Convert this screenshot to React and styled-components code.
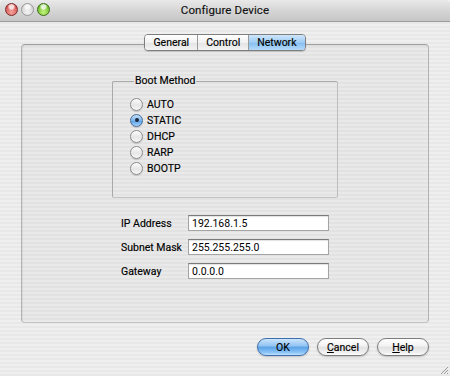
import React from 'react'
import styled, { createGlobalStyle } from 'styled-components'

const Global = createGlobalStyle`
	html, body {
		margin: 0;
		padding: 0;
		overflow: hidden;
	}
	body {
		font-family: Roboto, "Liberation Sans", sans-serif;
		font-size: 10.5px;
		color: #000;
	}
`

const Window = styled.div`
	position: relative;
	width: 450px;
	height: 376px;
	display: flex;
	flex-direction: column;
	background: repeating-linear-gradient(to bottom, #efefef 0 2px, #e8e8e8 2px 4px);
	overflow: hidden;
`

const TitleBar = styled.div`
	height: 22px;
	box-sizing: border-box;
	display: grid;
	grid-template-columns: 1fr auto 1fr;
	align-items: center;
	background: linear-gradient(to bottom, #e9e9e9, #d2d2d2 60%, #c6c6c6);
	border-bottom: 1px solid #9c9c9c;
	border-radius: 5px 5px 0 0;
`

const Lights = styled.div`
	display: flex;
	gap: 3px;
	padding-left: 5px;
	margin-top: -3px;
`

const Light = styled.span`
	width: 13px;
	height: 13px;
	box-sizing: border-box;
	border-radius: 50%;
	border: 1px solid ${p => p.$ring};
	background:
		radial-gradient(circle at 50% 25%, rgba(255,255,255,0.8) 0 2px, rgba(255,255,255,0) 4px),
		radial-gradient(circle at 50% 75%, ${p => p.$glow} 0, ${p => p.$fill} 70%);
`

const Title = styled.div`
	font-size: 11.5px;
	color: #111;
	margin-top: -2px;
	letter-spacing: 0.1px;
	-webkit-text-stroke: 0.15px #111;
`

const Content = styled.div`
	display: flex;
	flex-direction: column;
	padding: 12px 21px 0 21px;
`

const Tabs = styled.div`
	display: flex;
	justify-content: center;
	position: relative;
	z-index: 1;
`

const Segments = styled.div`
	display: flex;
	height: 17px;
	box-sizing: border-box;
	border: 1px solid #7e7e7e;
	border-radius: 4px;
	overflow: hidden;
	box-shadow: 0 1px 1px rgba(0,0,0,0.15);
`

const Tab = styled.div`
	padding: 0 8px;
	display: flex;
	align-items: center;
	font-size: 10.5px;
	color: #000;
	-webkit-text-stroke: 0.15px #000;
	background: ${p => p.$active
		? 'linear-gradient(to bottom, #cfe6fb, #9ccbf3 50%, #84bdf0 51%, #b5dafa)'
		: 'linear-gradient(to bottom, #ffffff, #f1f1f1 50%, #e3e3e3 51%, #f3f3f3)'};
	& + & {
		border-left: 1px solid #9a9a9a;
	}
`

const Panel = styled.div`
	margin-top: -7px;
	height: 279px;
	box-sizing: border-box;
	border: 1px solid #b2b2b2;
	border-top-color: #9e9e9e;
	border-bottom-color: #c4c4c4;
	border-radius: 4px;
	background: rgba(0,0,0,0.025);
	box-shadow: inset 1px 1px 1px rgba(0,0,0,0.06);
	padding-top: 30px;
	display: flex;
	flex-direction: column;
	align-items: center;
`

const Group = styled.fieldset`
	width: 226px;
	box-sizing: border-box;
	margin: 0;
	padding: 9px 0 21px 18px;
	border: 1px solid #a9a9a9;
	border-bottom-color: #c2c2c2;
	border-right-color: #bdbdbd;
	border-radius: 2px;
	display: flex;
	flex-direction: column;
`

const Legend = styled.legend`
	font-size: 10.5px;
	line-height: 12px;
	padding: 0 1px;
	margin-left: 3px;
	color: #000;
	-webkit-text-stroke: 0.15px #000;
`

const Option = styled.label`
	height: 16px;
	display: flex;
	align-items: center;
	gap: 4px;
	font-size: 10.5px;
	color: #000;
	-webkit-text-stroke: 0.15px #000;
`

const Radio = styled.input`
	appearance: none;
	margin: 0 0 0 -1px;
	width: 13px;
	height: 13px;
	box-sizing: border-box;
	border-radius: 50%;
	border: 1px solid #8c8c8c;
	background: linear-gradient(to bottom, #fdfdfd, #e6e6e6 55%, #f6f6f6);
	box-shadow: 0 1px 1px rgba(0,0,0,0.15);
	position: relative;
	&:checked {
		border-color: #4a6c98;
		background: linear-gradient(to bottom, #c4e0fa, #7db6ee 50%, #5a9fe6 55%, #a6d3fb);
	}
	&:checked::after {
		content: '';
		position: absolute;
		left: 3.5px;
		top: 3.5px;
		width: 4px;
		height: 4px;
		border-radius: 50%;
		background: #1e2a3c;
	}
`

const Fields = styled.div`
	margin-top: 17px;
	display: grid;
	grid-template-columns: 67px 141px;
	row-gap: 8px;
	align-items: center;
`

const FieldLabel = styled.label`
	font-size: 10.5px;
	color: #000;
	-webkit-text-stroke: 0.15px #000;
`

const Field = styled.input`
	width: 141px;
	height: 16px;
	box-sizing: border-box;
	margin: 0;
	padding: 0 3px;
	border: 1px solid #a4a4a4;
	border-top-color: #7a7a7a;
	background: #fff;
	box-shadow: inset 0 1px 1px rgba(0,0,0,0.12);
	font-family: Roboto, "Liberation Sans", sans-serif;
	font-size: 10.5px;
	color: #000;
	outline: none;
`

const Buttons = styled.div`
	margin-top: 15px;
	display: flex;
	justify-content: flex-end;
	gap: 8px;
`

const Button = styled.button`
	width: 52px;
	height: 18px;
	box-sizing: border-box;
	margin: 0;
	padding: 0;
	border-radius: 9px;
	border: 1px solid ${p => p.$primary ? '#3f6fae' : '#7d7d7d'};
	background: ${p => p.$primary
		? 'linear-gradient(to bottom, #cbe5fb, #8ec2f2 45%, #5aa1e6 50%, #8cc5f6 85%, #c3e3fd)'
		: 'linear-gradient(to bottom, #ffffff, #f2f2f2 45%, #e2e2e2 50%, #f0f0f0 85%, #ffffff)'};
	box-shadow: 0 1px 2px rgba(0,0,0,0.2);
	font-family: Roboto, "Liberation Sans", sans-serif;
	font-size: 10.5px;
	color: #000;
	-webkit-text-stroke: 0.15px #000;
`

const U = styled.span`
	text-decoration: underline;
`

const Grip = styled.svg`
	position: absolute;
	right: 1px;
	bottom: 1px;
`

const methods = ['AUTO', 'STATIC', 'DHCP', 'RARP', 'BOOTP']
const fields = [
	['IP Address', '192.168.1.5'],
	['Subnet Mask', '255.255.255.0'],
	['Gateway', '0.0.0.0'],
]

export default function App() {
	return (
		<Window>
			<Global />
			<TitleBar>
				<Lights>
					<Light $ring="#7a2a2a" $fill="#d65450" $glow="#f3a39c" />
					<Light $ring="#9a9a9a" $fill="#d4d4d4" $glow="#f2f2f2" />
					<Light $ring="#3f6b1c" $fill="#6fbf2a" $glow="#c4f37c" />
				</Lights>
				<Title>Configure Device</Title>
				<div />
			</TitleBar>
			<Content>
				<Tabs>
					<Segments>
						<Tab>General</Tab>
						<Tab>Control</Tab>
						<Tab $active>Network</Tab>
					</Segments>
				</Tabs>
				<Panel>
					<Group>
						<Legend>Boot Method</Legend>
						{methods.map(m => (
							<Option key={m}>
								<Radio type="radio" name="boot" defaultChecked={m === 'STATIC'} />
								{m}
							</Option>
						))}
					</Group>
					<Fields>
						{fields.map(([label, value]) => (
							<React.Fragment key={label}>
								<FieldLabel>{label}</FieldLabel>
								<Field defaultValue={value} />
							</React.Fragment>
						))}
					</Fields>
				</Panel>
				<Buttons>
					<Button $primary>OK</Button>
					<Button><U>C</U>ancel</Button>
					<Button><U>H</U>elp</Button>
				</Buttons>
			</Content>
			<Grip width="10" height="10" viewBox="0 0 10 10">
				<path d="M9 2 L2 9 M9 5 L5 9 M9 8 L8 9" stroke="#9a9a9a" strokeWidth="1" />
			</Grip>
		</Window>
	)
}
